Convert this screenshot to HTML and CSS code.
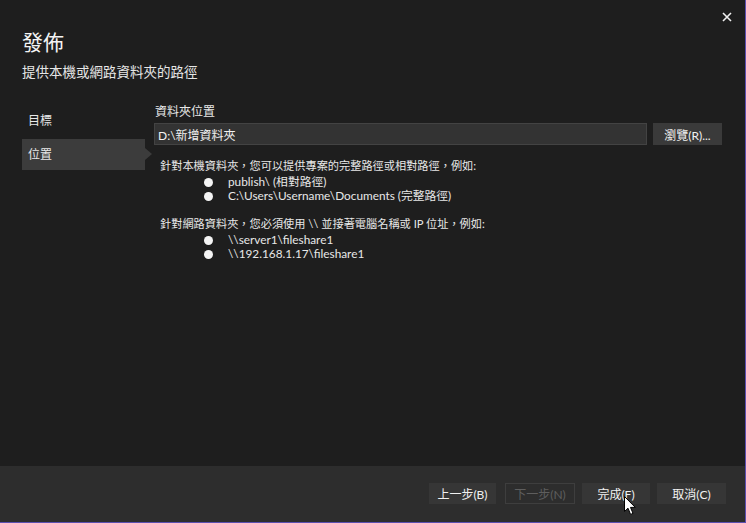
FILE: index.html
```html
<!DOCTYPE html>
<html lang="zh-Hant">

<head>
    <meta charset="UTF-8">
    <title>發佈</title>
    <link rel="stylesheet" href="styles.css">
</head>

<body>
    <div class="dialog">
        <div class="dialog-top">
            <button class="close-btn" aria-label="關閉">
                <svg width="10" height="10" viewBox="0 0 10 10">
                    <path d="M1 1 L9 9 M9 1 L1 9" stroke="#f0f0f0" stroke-width="1.6" />
                </svg>
            </button>
        </div>

        <div class="header">
            <h1>發佈</h1>
            <p class="subtitle">提供本機或網路資料夾的路徑</p>
        </div>

        <div class="main">
            <ul class="steps">
                <li>目標</li>
                <li class="active">位置</li>
            </ul>

            <div class="content">
                <label class="field-label">資料夾位置</label>
                <div class="path-row">
                    <input class="path-input" type="text" value="D:\新增資料夾">
                    <button class="btn">瀏覽(R)...</button>
                </div>

                <div class="hint hint-local">
                    <p>針對本機資料夾，您可以提供專案的完整路徑或相對路徑，例如:</p>
                    <ul>
                        <li>publish\ (相對路徑)</li>
                        <li>C:\Users\Username\Documents (完整路徑)</li>
                    </ul>
                </div>

                <div class="hint hint-network">
                    <p>針對網路資料夾，您必須使用 \\ 並接著電腦名稱或 IP 位址，例如:</p>
                    <ul>
                        <li>\\server1\fileshare1</li>
                        <li>\\192.168.1.17\fileshare1</li>
                    </ul>
                </div>
            </div>
        </div>

        <div class="footer">
            <button class="btn back">上一步(B)</button>
            <button class="btn next" disabled>下一步(N)</button>
            <button class="btn finish">完成(F)
                <svg class="cursor" width="13" height="20" viewBox="0 0 13 20">
                    <path d="M0.5 0.5 L0.5 15.5 L4 12.2 L6.6 18.4 L9 17.4 L6.5 11.4 L11.3 11.4 Z" fill="#fff" stroke="#000" stroke-width="1" />
                </svg>
            </button>
            <button class="btn cancel">取消(C)</button>
        </div>
    </div>
</body>

</html>
```

FILE: styles.css
```css
html,
body {
    margin: 0;
    padding: 0;
}

body {
    width: 746px;
    height: 523px;
    overflow: hidden;
    background-color: #1e1e1e;
    font-family: "Lato", "Noto Sans CJK TC", sans-serif;
    color: #f1f1f1;
}

.dialog {
    width: 746px;
    height: 523px;
    box-sizing: border-box;
    border-right: 1px solid #5b4fb0;
    border-bottom: 1px solid #5b4fb0;
    display: flex;
    flex-direction: column;
    background-color: #1e1e1e;
}

.dialog-top {
    height: 30px;
    display: flex;
    justify-content: flex-end;
}

.close-btn {
    background: none;
    border: none;
    padding: 0;
    width: 20px;
    height: 20px;
    margin: 7px 8px 0 0;
    display: flex;
    align-items: center;
    justify-content: center;
}

.header {
    padding-left: 22px;
}

h1 {
    margin: 0;
    font-family: "Noto Sans CJK TC", sans-serif;
    font-size: 21px;
    font-weight: normal;
    line-height: 26px;
    color: #f4f4f4;
    position: relative;
    top: -2px;
}

.subtitle {
    margin: 6px 0 0;
    font-family: "Noto Sans CJK TC", sans-serif;
    font-size: 13.5px;
    line-height: 18px;
    color: #e6e6e6;
}

.main {
    flex: 1;
    display: flex;
    padding-top: 24px;
}

.steps {
    list-style: none;
    margin: 1px 0 0 22px;
    padding: 0;
    width: 123px;
}

.steps li {
    height: 31px;
    line-height: 31px;
    padding-left: 6px;
    font-size: 12px;
    color: #e8e8e8;
    position: relative;
}

.steps li + li {
    margin-top: 3px;
}

.steps li.active {
    background-color: #3c3c3c;
}

.steps li.active::after {
    content: "";
    position: absolute;
    right: -7px;
    top: 9px;
    border-left: 7px solid #3c3c3c;
    border-top: 6px solid transparent;
    border-bottom: 6px solid transparent;
}

.content {
    margin-left: 9px;
    width: 568px;
}

.field-label {
    display: block;
    font-size: 12px;
    line-height: 16px;
    color: #e8e8e8;
    padding-left: 1px;
}

.path-row {
    display: flex;
    gap: 6px;
    margin-top: 3px;
}

.path-input {
    flex: 1;
    height: 22px;
    box-sizing: border-box;
    background-color: #333333;
    border: 1px solid #434343;
    color: #f1f1f1;
    font-family: inherit;
    font-size: 12px;
    padding: 0 3px;
    outline: none;
}

.btn {
    height: 22px;
    min-width: 69px;
    box-sizing: border-box;
    background-color: #3a3a3a;
    border: 1px solid #3a3a3a;
    color: #f1f1f1;
    font-family: inherit;
    font-size: 12px;
    padding: 0 8px;
}

.hint {
    margin-left: 6px;
    font-size: 11.2px;
    line-height: 14px;
    color: #e8e8e8;
}

.hint-local {
    margin-top: 14px;
}

.hint-network {
    margin-top: 14px;
}

.hint p {
    margin: 0;
}

.hint ul {
    margin: 2px 0 0;
    padding-left: 68px;
    list-style: none;
}

.hint li {
    position: relative;
    font-size: 11.8px;
}

.hint li::before {
    content: "";
    position: absolute;
    left: -24px;
    top: 3px;
    width: 9px;
    height: 9px;
    border-radius: 50%;
    background-color: #f4f4f4;
}

.footer {
    height: 56px;
    background-color: #2d2d2d;
    display: flex;
    justify-content: flex-end;
    align-items: flex-start;
    gap: 7px;
    padding: 17px 19px 0 0;
    box-sizing: border-box;
}

.footer .btn {
    background-color: #363636;
    border-color: #363636;
    height: 21px;
    min-width: 0;
    width: 68px;
    padding: 0;
}

.footer .back {
    width: 67px;
    margin-right: 2px;
}

.footer .cancel {
    width: 69px;
}

.footer .btn:disabled {
    background-color: transparent;
    border-color: #3e3e3e;
    color: #5e5e5e;
    width: 70px;
}

.finish {
    position: relative;
}

.cursor {
    position: absolute;
    left: 41px;
    top: 12px;
}
```
